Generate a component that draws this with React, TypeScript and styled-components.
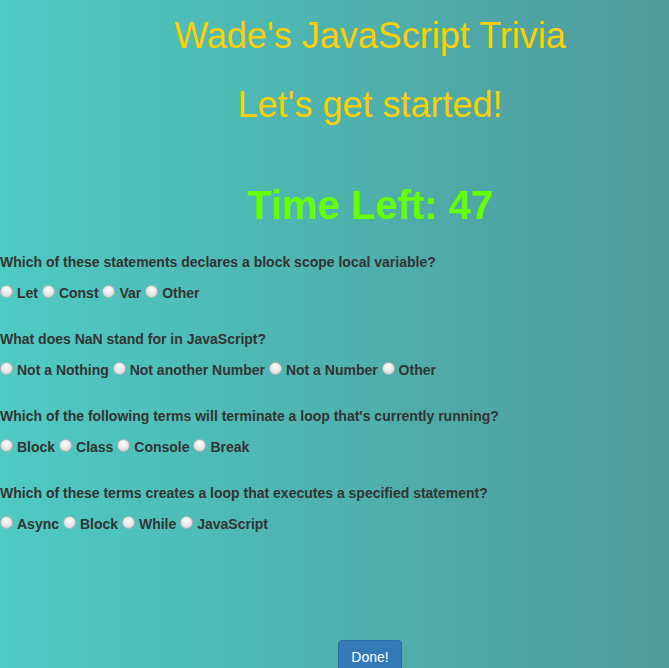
import { createGlobalStyle } from 'styled-components'
import styled from 'styled-components'

const GlobalStyle = createGlobalStyle`
  html, body {
    margin: 0;
    padding: 0;
  }
  body {
    font-family: "Liberation Sans", Arial, sans-serif;
    color: #333;
    background: linear-gradient(to right, #4ecbc3, #4f9a9a);
    min-height: 668px;
    overflow: hidden;
  }
`

const Page = styled.div`
  min-height: 668px;
`

// headings sit a bit right of the viewport centre, as in the original page
const Header = styled.header`
  padding-left: 71px;
  text-align: center;
`

const Title = styled.h1`
  margin: 0;
  padding-top: 14px;
  font-size: 36px;
  font-weight: normal;
  color: #fcd000;
  line-height: 44px;
`

const Subtitle = styled.h2`
  margin: 25px 0 0;
  font-size: 36px;
  font-weight: normal;
  color: #fcd000;
  line-height: 44px;
`

const Timer = styled.h2`
  margin: 53px 0 0;
  font-size: 40px;
  font-weight: bold;
  color: #66ff00;
  line-height: 50px;
`

const Quiz = styled.form`
  margin-top: 22px;
`

const Question = styled.div`
  margin-bottom: 26px;
`

const Prompt = styled.p`
  margin: 0 0 11px;
  font-size: 14px;
  font-weight: bold;
  line-height: 20px;
`

const Choices = styled.div`
  font-size: 14px;
  font-weight: bold;
  line-height: 20px;
`

const Choice = styled.label`
  cursor: pointer;
`

const Radio = styled.input`
  appearance: none;
  width: 13px;
  height: 13px;
  margin: 0 4px 0 0;
  border-radius: 50%;
  border: 1px solid #b5b5b5;
  background: radial-gradient(circle at 50% 35%, #ffffff 0%, #e6e6e6 55%, #c8c8c8 100%);
  vertical-align: 0px;
  box-sizing: border-box;
  &:checked {
    background: radial-gradient(circle, #333 0 3px, #eee 3.5px);
  }
`

const Footer = styled.div`
  padding-left: 71px;
  padding-top: 80px;
  text-align: center;
`

const DoneButton = styled.button`
  font-family: "Liberation Sans", Arial, sans-serif;
  font-size: 14px;
  line-height: 20px;
  padding: 6px 12px;
  color: #fff;
  background: #337ab7;
  border: 1px solid #2e6da4;
  border-radius: 4px;
`

const questions = [
  {
    name: 'q1',
    text: 'Which of these statements declares a block scope local variable?',
    options: ['Let', 'Const', 'Var', 'Other'],
  },
  {
    name: 'q2',
    text: 'What does NaN stand for in JavaScript?',
    options: ['Not a Nothing', 'Not another Number', 'Not a Number', 'Other'],
  },
  {
    name: 'q3',
    text: "Which of the following terms will terminate a loop that's currently running?",
    options: ['Block', 'Class', 'Console', 'Break'],
  },
  {
    name: 'q4',
    text: 'Which of these terms creates a loop that executes a specified statement?',
    options: ['Async', 'Block', 'While', 'JavaScript'],
  },
]

export default function App() {
  return (
    <>
      <GlobalStyle />
      <Page>
        <Header>
          <Title>Wade's JavaScript Trivia</Title>
          <Subtitle>Let's get started!</Subtitle>
          <Timer>Time Left: 47</Timer>
        </Header>
        <Quiz onSubmit={(e) => e.preventDefault()}>
          {questions.map((q) => (
            <Question key={q.name}>
              <Prompt>{q.text}</Prompt>
              <Choices>
                {q.options.map((opt) => (
                  <Choice key={opt}>
                    <Radio type="radio" name={q.name} value={opt} />
                    {opt}{' '}
                  </Choice>
                ))}
              </Choices>
            </Question>
          ))}
        </Quiz>
        <Footer>
          <DoneButton type="submit">Done!</DoneButton>
        </Footer>
      </Page>
    </>
  )
}
